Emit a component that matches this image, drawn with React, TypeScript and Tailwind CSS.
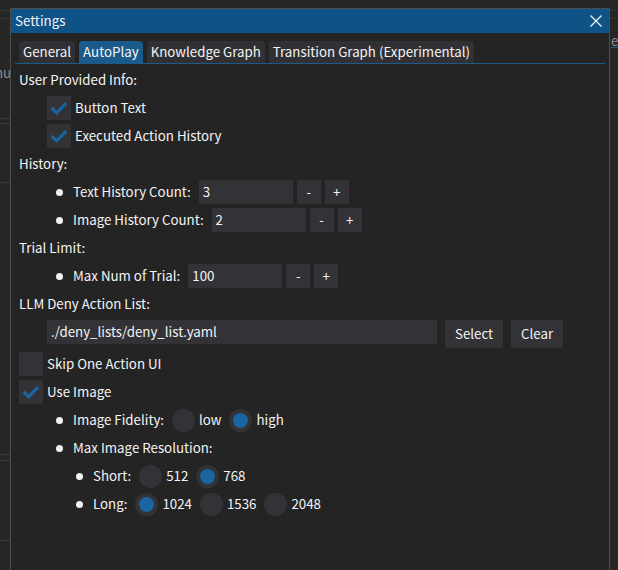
import React from "react";

const font = "font-['Noto_Sans_CJK_JP','Noto_Sans',sans-serif]";

function Checkbox({ checked, label }: { checked: boolean; label: string }) {
  return (
    <div className="flex h-6 items-center gap-1">
      <div className="flex h-6 w-6 shrink-0 bg-[#333337]">
        {checked && (
          <svg width="24" height="24" viewBox="0 0 24 24">
            <path d="M4.8 12 L9.6 16.8 L19.2 7.2" stroke="#1a64a1" strokeWidth="3.2" fill="none" />
          </svg>
        )}
      </div>
      <span>{label}</span>
    </div>
  );
}

function Radio({ on, label }: { on?: boolean; label: string }) {
  return (
    <div className="flex items-center gap-1">
      <div className="flex h-[23px] w-[23px] items-center justify-center rounded-full bg-[#333337]">
        {on && <div className="h-[15px] w-[15px] rounded-full bg-[#1a64a1]" />}
      </div>
      <span>{label}</span>
    </div>
  );
}

function BulletRow({ children }: { children: React.ReactNode }) {
  return (
    <div className="flex h-6 items-center">
      <div className="flex w-[26px] shrink-0 pl-[9px]">
        <div className="h-[7px] w-[7px] rounded-full bg-[#f2f2f2]" />
      </div>
      <div className="flex items-center gap-2">{children}</div>
    </div>
  );
}

function Counter({ label, value }: { label: string; value: string }) {
  return (
    <BulletRow>
      <span>{label}</span>
      <div className="flex items-center gap-1">
        <div className="flex h-6 w-[94px] items-center bg-[#333337] px-1">{value}</div>
        <button className="h-6 w-6 bg-[#333337] text-center">-</button>
        <button className="h-6 w-6 bg-[#333337] text-center">+</button>
      </div>
    </BulletRow>
  );
}

function Label({ children }: { children: React.ReactNode }) {
  return <div className="flex h-6 items-center">{children}</div>;
}

export default function App() {
  const tabs = ["General", "AutoPlay", "Knowledge Graph", "Transition Graph (Experimental)"];

  return (
    <div className={`relative h-[570px] w-[618px] overflow-hidden bg-[#262626] text-[13.3px] text-[#f4f4f4] ${font}`}>
      {/* host app peeking out behind the window */}
      <div className="absolute left-0 top-[10px] h-px w-full bg-[#363636]" />
      <div className="absolute left-0 top-[18px] h-px w-full bg-[#363636]" />
      <div className="absolute left-[-5px] top-[63px] text-[#8c8c8c]">nu</div>
      <div className="absolute left-0 top-[118px] h-px w-[10px] bg-[#3a3a3a]" />
      <div className="absolute left-0 top-[123px] h-px w-[10px] bg-[#3a3a3a]" />
      <div className="absolute left-0 top-[182px] h-px w-[10px] bg-[#3a3a3a]" />
      <div className="absolute left-0 top-[454px] h-px w-[10px] bg-[#3a3a3a]" />
      <div className="absolute left-0 top-[460px] h-px w-[10px] bg-[#3a3a3a]" />
      <div className="absolute left-0 top-[540px] h-px w-[10px] bg-[#3a3a3a]" />
      <div className="absolute left-[611px] top-[31px] text-[#8c8c8c]">er</div>
      <div className="absolute left-[611px] top-[47px] h-px w-[8px] bg-[#1b5b8b]" />

      {/* Settings window */}
      <div className="absolute left-[10px] top-[8px] flex h-[580px] w-[600px] flex-col border border-[#4d4d4d] bg-[#242424]">
        <div className="flex h-6 shrink-0 items-center justify-between bg-[#0f5386] pl-1 pr-[7px]">
          <span>Settings</span>
          <svg width="12" height="12" viewBox="0 0 12 12">
            <path d="M0.5 0.5 L11.5 11.5 M11.5 0.5 L0.5 11.5" stroke="#f2f2f2" strokeWidth="1.3" />
          </svg>
        </div>

        <div className="flex flex-col px-2 pt-2">
          <div className="-mx-1 flex gap-1 border-b border-[#1b5b8b] px-1">
            {tabs.map((t) => (
              <div
                key={t}
                className={`flex h-[22px] items-center rounded-t px-1 ${t === "AutoPlay" ? "bg-[#1b5b8b]" : "bg-[#313135]"}`}
              >
                {t}
              </div>
            ))}
          </div>

          <div className="mt-1 flex flex-col gap-1">
            <Label>User Provided Info:</Label>
            <div className="flex flex-col gap-1 pl-7">
              <Checkbox checked label="Button Text" />
              <Checkbox checked label="Executed Action History" />
            </div>

            <Label>History:</Label>
            <div className="flex flex-col gap-1 pl-7">
              <Counter label="Text History Count:" value="3" />
              <Counter label="Image History Count:" value="2" />
            </div>

            <Label>Trial Limit:</Label>
            <div className="flex flex-col gap-1 pl-7">
              <Counter label="Max Num of Trial:" value="100" />
            </div>

            <Label>LLM Deny Action List:</Label>
            <div className="flex items-start gap-2 pl-7">
              <div className="flex h-6 w-[390px] items-center bg-[#333337] px-1">./deny_lists/deny_list.yaml</div>
              <button className="h-7 bg-[#333337] px-2.5">Select</button>
              <button className="h-7 bg-[#333337] px-2.5">Clear</button>
            </div>

            <Checkbox checked={false} label="Skip One Action UI" />
            <Checkbox checked label="Use Image" />

            <div className="flex flex-col gap-1 pl-7">
              <BulletRow>
                <span>Image Fidelity:</span>
                <Radio label="low" />
                <Radio on label="high" />
              </BulletRow>
              <BulletRow>
                <span>Max Image Resolution:</span>
              </BulletRow>
              <div className="flex flex-col gap-1 pl-5">
                <BulletRow>
                  <span>Short:</span>
                  <Radio label="512" />
                  <Radio on label="768" />
                </BulletRow>
                <BulletRow>
                  <span>Long:</span>
                  <Radio on label="1024" />
                  <Radio label="1536" />
                  <Radio label="2048" />
                </BulletRow>
              </div>
            </div>
          </div>
        </div>
      </div>
    </div>
  );
}
